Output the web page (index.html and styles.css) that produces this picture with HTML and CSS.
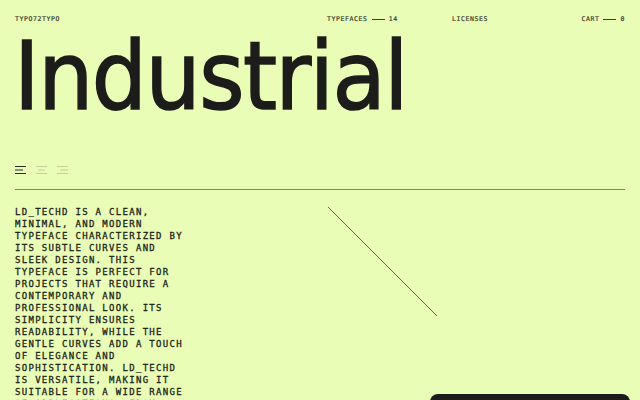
FILE: index.html
```html
<!DOCTYPE html>
<html lang="en">
<head>
<meta charset="utf-8">
<title>Industrial</title>
<link rel="stylesheet" href="styles.css">
</head>
<body>
<div class="page">
  <header class="nav">
    <div class="logo">TYPO72TYPO</div>
    <div class="nav-item">TYPEFACES <span class="dash"></span> 14</div>
    <div class="nav-item">LICENSES</div>
    <div class="nav-item cart">CART <span class="dash"></span> 0</div>
  </header>

  <h1 class="title">Industrial</h1>

  <div class="tools">
    <svg class="icon" width="12" height="10" viewBox="0 0 12 10"><path d="M0 1.5H11M0 5H8M0 8.5H11" stroke="#2a2d22" stroke-width="1"/></svg>
    <svg class="icon faint" width="12" height="10" viewBox="0 0 12 10"><path d="M0 1.5H11M2 5H9M0 8.5H11" stroke="#2a2d22" stroke-width="1"/></svg>
    <svg class="icon faint" width="12" height="10" viewBox="0 0 12 10"><path d="M0 1.5H11M3 5H11M0 8.5H11" stroke="#2a2d22" stroke-width="1"/></svg>
  </div>

  <div class="rule"></div>

  <main class="content">
    <p class="desc">LD_TECHD IS A CLEAN, MINIMAL, AND MODERN TYPEFACE CHARACTERIZED BY ITS SUBTLE CURVES AND SLEEK DESIGN. THIS TYPEFACE IS PERFECT FOR PROJECTS THAT REQUIRE A CONTEMPORARY AND PROFESSIONAL LOOK. ITS SIMPLICITY ENSURES READABILITY, WHILE THE GENTLE CURVES ADD A TOUCH OF ELEGANCE AND SOPHISTICATION. LD_TECHD IS VERSATILE, MAKING IT SUITABLE FOR A WIDE RANGE OF APPLICATIONS, FROM BRANDING TO EDITORIAL DESIGN.</p>
    <div class="preview">
      <svg class="diag" width="112" height="112" viewBox="0 0 112 112"><line x1="1" y1="1" x2="110" y2="110" stroke="#3a3f2c" stroke-width="0.8"/></svg>
    </div>
  </main>
</div>
<div class="panel"></div>
</body>
</html>
```

FILE: styles.css
```css
html, body {
  margin: 0;
  padding: 0;
  background: #e9fdb6;
  overflow: hidden;
  height: 100%;
}
.page {
  padding: 0 15px;
  color: #1e1f1a;
}
.nav {
  display: grid;
  grid-template-columns: 312px 125px 1fr auto;
  align-items: center;
  height: 38px;
  font-family: "DejaVu Sans Mono", monospace;
  font-size: 6.5px;
  letter-spacing: 0.6px;
  color: #3b4030;
  font-weight: normal;
  -webkit-text-stroke: 0.2px #3b4030;
}
.nav-item {
  display: flex;
  align-items: center;
  gap: 4px;
}
.dash {
  display: inline-block;
  width: 13px;
  height: 1px;
  background: #3b4030;
}
.title {
  margin: 0;
  height: 74px;
  font-family: "DejaVu Sans", sans-serif;
  font-weight: normal;
  font-size: 94px;
  line-height: 74px;
  letter-spacing: -1.6px;
  color: #1c1d1a;
  -webkit-text-stroke: 1.6px #1c1d1a;
  margin-left: -1px;
  margin-top: 2px;
  transform: scaleX(0.925);
  transform-origin: left center;
  white-space: nowrap;
}
.tools {
  display: flex;
  gap: 9px;
  margin-top: 51px;
  height: 10px;
}
.icon.faint {
  opacity: 0.2;
}
.rule {
  margin-top: 14px;
  height: 1px;
  background: #7f8c5e;
}
.content {
  display: flex;
  padding-top: 16px;
}
.desc {
  margin: 0;
  width: 172px;
  font-family: "DejaVu Sans Mono", monospace;
  font-size: 9px;
  line-height: 12px;
  letter-spacing: 1.3px;
  color: #1e1f1a;
  -webkit-text-stroke: 0.3px #1e1f1a;
}
.preview {
  margin-left: 140px;
}
.diag {
  display: block;
}
.panel {
  position: fixed;
  left: 430px;
  top: 394px;
  width: 200px;
  height: 40px;
  background: #1c1c1b;
  border-radius: 8px;
}
```
